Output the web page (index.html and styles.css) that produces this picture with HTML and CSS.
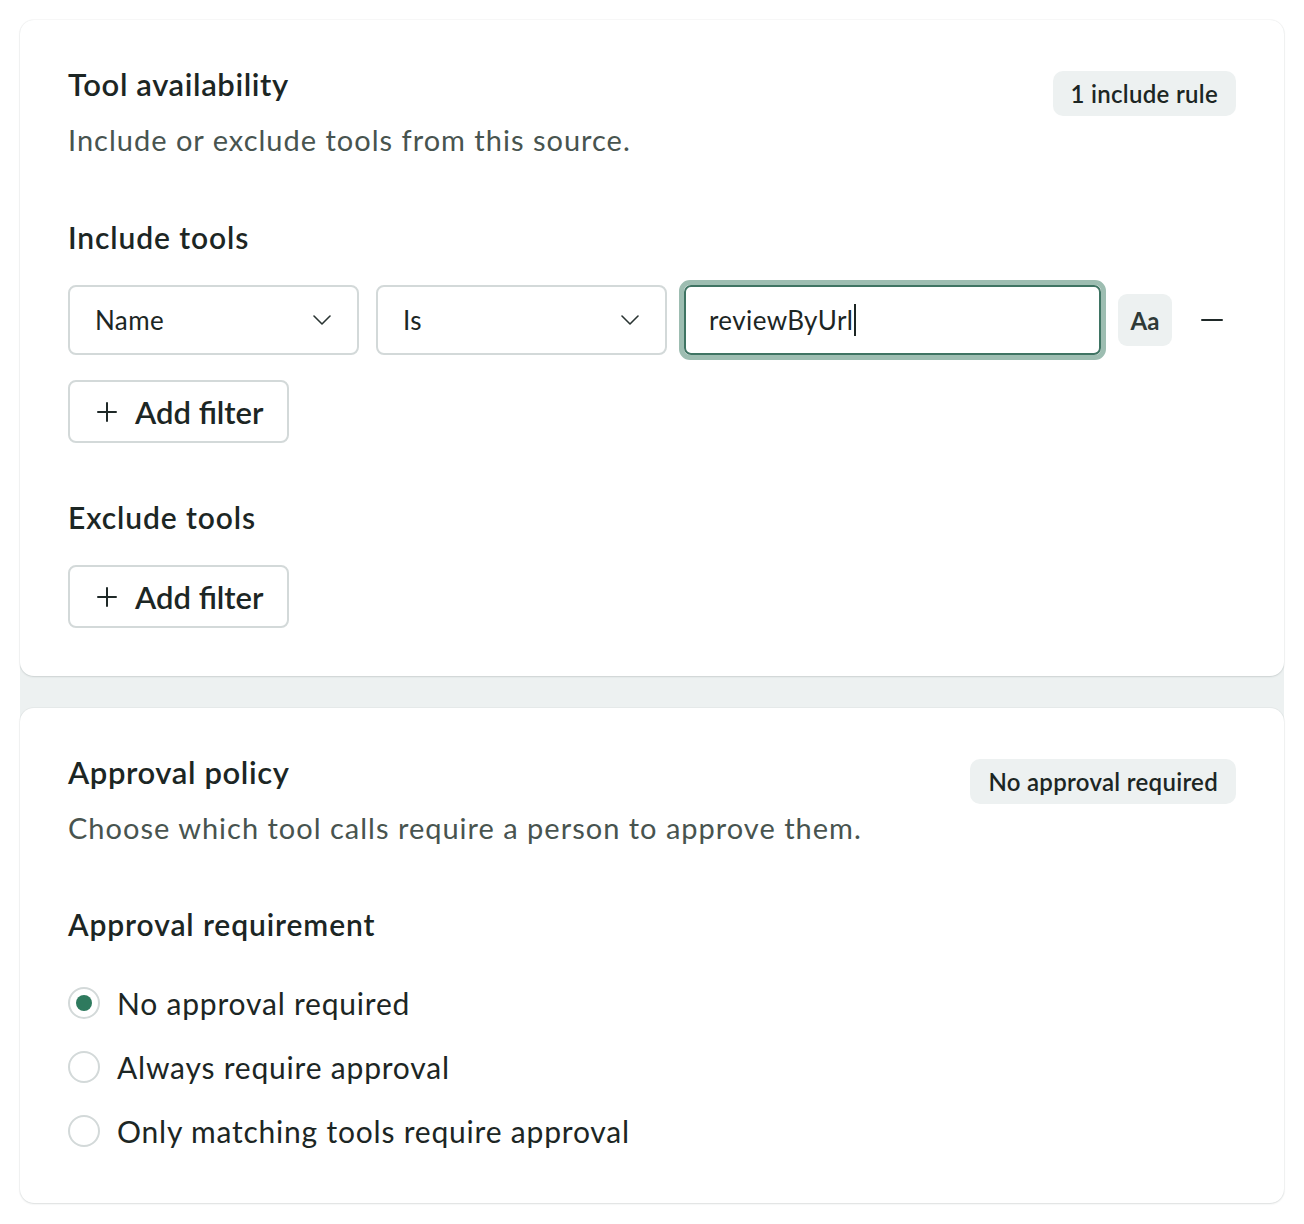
FILE: index.html
```html
<!DOCTYPE html>
<html lang="en">
<head>
<meta charset="utf-8">
<title>Tool settings</title>
<link rel="stylesheet" href="styles.css">
</head>
<body>
<div class="stack">
  <section class="card card-tools">
    <div class="card-head">
      <div>
        <h2 class="card-title">Tool availability</h2>
        <p class="card-sub">Include or exclude tools from this source.</p>
      </div>
      <span class="badge">1 include rule</span>
    </div>

    <h3 class="group-title">Include tools</h3>
    <div class="filter-row">
      <div class="select">
        <span>Name</span>
        <svg class="chev" viewBox="0 0 18 10" width="18" height="10"><path d="M1 1l8 8 8-8" fill="none" stroke="#2a3432" stroke-width="1.6" stroke-linecap="round" stroke-linejoin="round"/></svg>
      </div>
      <div class="select">
        <span>Is</span>
        <svg class="chev" viewBox="0 0 18 10" width="18" height="10"><path d="M1 1l8 8 8-8" fill="none" stroke="#2a3432" stroke-width="1.6" stroke-linecap="round" stroke-linejoin="round"/></svg>
      </div>
      <div class="input-ring">
        <div class="input"><span>reviewByUrl</span><span class="caret"></span></div>
      </div>
      <button class="case-btn">Aa</button>
      <button class="remove-btn" aria-label="Remove"><svg viewBox="0 0 22 4" width="22" height="4"><path d="M1 2h20" stroke="#1f2928" stroke-width="2" stroke-linecap="round"/></svg></button>
    </div>
    <button class="add-btn first">
      <svg viewBox="0 0 20 20" width="20" height="20"><path d="M10 1v18M1 10h18" stroke="#1f2928" stroke-width="2" stroke-linecap="round"/></svg>
      <span>Add filter</span>
    </button>

    <h3 class="group-title exclude">Exclude tools</h3>
    <button class="add-btn">
      <svg viewBox="0 0 20 20" width="20" height="20"><path d="M10 1v18M1 10h18" stroke="#1f2928" stroke-width="2" stroke-linecap="round"/></svg>
      <span>Add filter</span>
    </button>
  </section>

  <section class="card card-approval">
    <div class="card-head">
      <div>
        <h2 class="card-title">Approval policy</h2>
        <p class="card-sub">Choose which tool calls require a person to approve them.</p>
      </div>
      <span class="badge">No approval required</span>
    </div>

    <h3 class="group-title approval">Approval requirement</h3>
    <div class="radios">
      <label class="radio checked"><span class="dot"></span><span>No approval required</span></label>
      <label class="radio"><span class="dot"></span><span>Always require approval</span></label>
      <label class="radio"><span class="dot"></span><span>Only matching tools require approval</span></label>
    </div>
  </section>
</div>
</body>
</html>
```

FILE: styles.css
```css
* { box-sizing: border-box; }

html, body {
  margin: 0;
  padding: 0;
  background: #ffffff;
}

body {
  font-family: Lato, "Open Sans", "Liberation Sans", sans-serif;
  color: #1c2624;
  padding: 20px;
}

.stack {
  display: flex;
  flex-direction: column;
  gap: 32px;
  background: #edf1f1;
  border-radius: 14px;
}

.card {
  background: #ffffff;
  border-radius: 14px;
  box-shadow: 0 1px 2px rgba(20, 40, 40, 0.12), 0 0 0 1px rgba(20, 40, 40, 0.03);
  padding: 44px 48px 48px 48px;
}

.card-approval {
  padding-top: 44px;
  padding-bottom: 52px;
}

.card-head {
  display: flex;
  justify-content: space-between;
  align-items: flex-start;
}

.card-title {
  margin: 0;
  font-size: 31px;
  line-height: 40px;
  font-weight: 600;
  letter-spacing: 0.6px;
  color: #1c2624;
}

.card-sub {
  margin: 16px 0 0 0;
  font-size: 29px;
  line-height: 40px;
  font-weight: 400;
  letter-spacing: 1px;
  color: #48544f;
}

.badge {
  margin-top: 7px;
  background: #edf1f1;
  border-radius: 10px;
  height: 45px;
  padding: 0 18px;
  display: flex;
  align-items: center;
  font-size: 24px;
  font-weight: 600;
  letter-spacing: 0.3px;
  color: #1c2624;
}

.group-title {
  margin: 57px 0 0 0;
  font-size: 30px;
  line-height: 40px;
  font-weight: 600;
  letter-spacing: 0.9px;
  color: #1c2624;
}

.group-title.exclude {
  margin-top: 54px;
}

.group-title.approval {
  margin-top: 56px;
}

.filter-row {
  margin-top: 23px;
  display: flex;
  align-items: center;
}

.select {
  width: 291px;
  height: 70px;
  border: 2px solid #d3d9d9;
  border-radius: 8px;
  padding: 0 26px 0 25px;
  display: flex;
  align-items: center;
  justify-content: space-between;
  font-size: 26px;
  letter-spacing: 0.4px;
  color: #1c2624;
  margin-right: 17px;
}

.select .chev {
  display: block;
}

.input-ring {
  margin-left: -5px;
  width: 427px;
  height: 80px;
  border: 5px solid #9dbdb1;
  border-radius: 11px;
}

.input {
  height: 100%;
  border: 2px solid #3f7463;
  border-radius: 7px;
  padding: 0 0 0 23px;
  display: flex;
  align-items: center;
  font-size: 26px;
  letter-spacing: 0.4px;
  color: #1c2624;
}

.caret {
  display: inline-block;
  width: 2px;
  height: 32px;
  background: #1c2624;
  margin-left: 1px;
}

.case-btn {
  margin-left: 12px;
  width: 54px;
  height: 52px;
  border: none;
  border-radius: 9px;
  background: #edf1f1;
  font-family: inherit;
  font-size: 24px;
  font-weight: 700;
  color: #2f3a38;
  padding: 0;
}

.remove-btn {
  margin-left: 29px;
  border: none;
  background: transparent;
  padding: 0;
  width: 22px;
  height: 22px;
  display: flex;
  align-items: center;
}

.add-btn {
  display: flex;
  align-items: center;
  gap: 18px;
  height: 63px;
  width: 221px;
  padding: 0 0 0 27px;
  border: 2px solid #d3d9d9;
  border-radius: 8px;
  background: #ffffff;
  font-family: inherit;
  font-size: 31px;
  font-weight: 600;
  color: #1c2624;
  margin-top: 28px;
}

.add-btn.first {
  margin-top: 20px;
}

.add-btn svg {
  display: block;
}

.radios {
  margin-top: 39px;
  display: flex;
  flex-direction: column;
  gap: 24px;
}

.radio {
  display: flex;
  align-items: center;
  height: 40px;
  gap: 17px;
  font-size: 30px;
  letter-spacing: 0.8px;
  color: #1c2624;
}

.dot {
  width: 32px;
  height: 32px;
  border-radius: 50%;
  border: 2px solid #d3d9d9;
  display: flex;
  align-items: center;
  justify-content: center;
  flex: none;
}

.radio.checked .dot::after {
  content: "";
  width: 16px;
  height: 16px;
  border-radius: 50%;
  background: #2e7a5e;
}
```
